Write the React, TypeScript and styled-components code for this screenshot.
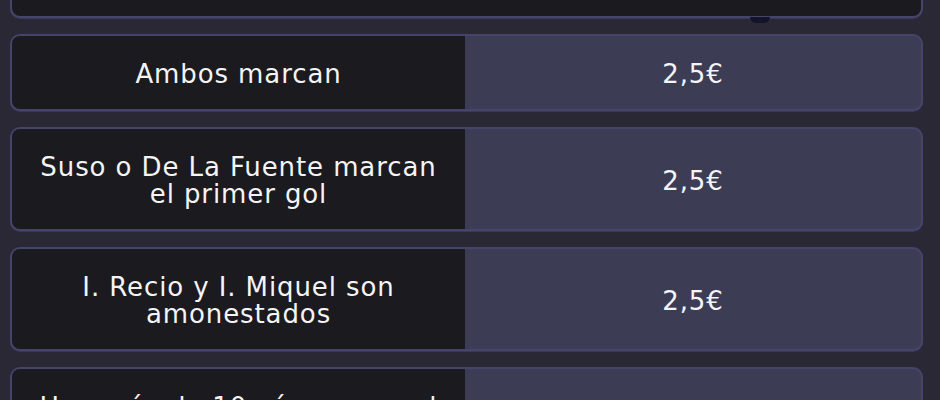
import React from "react";
import styled, { createGlobalStyle } from "styled-components";

const Global = createGlobalStyle`
  html, body {
    margin: 0;
    padding: 0;
    background: #292834;
    overflow: hidden;
  }
  body {
    font-family: "DejaVu Sans", "Open Sans", sans-serif;
    color: #f4f4f6;
  }
`;

const Page = styled.div`
  width: 940px;
  height: 400px;
  overflow: hidden;
  background: #292834;
`;

const List = styled.div`
  display: flex;
  flex-direction: column;
  gap: 16px;
  margin-top: -59px;
  padding: 0 17px 0 10px;
`;

const Card = styled.div<{ $plain?: boolean }>`
  position: relative;
  display: grid;
  grid-template-columns: ${(p) => (p.$plain ? "1fr" : "453px 1fr")};
  border: 2px solid #45446a;
  border-radius: 10px;
  background: ${(p) => (p.$plain ? "#1b1a1e" : "#3d3c55")};
  box-shadow: 0 1px 0 #3a3956;
  min-height: 73px;
`;

const Blob = styled.span`
  position: absolute;
  left: 738px;
  bottom: -7px;
  width: 20px;
  height: 6px;
  border-radius: 0 0 10px 10px;
  background: #14142a;
  filter: blur(0.6px);
`;

const Text = styled.div`
  display: flex;
  align-items: center;
  justify-content: center;
  text-align: center;
  padding: 25px 18px 21px;
  font-size: 26px;
  line-height: 27px;
  font-weight: 400;
  letter-spacing: 0.9px;
`;

const Question = styled(Text)`
  background: #1b1a1e;
  border-radius: 8px 0 0 8px;
`;

const Value = styled(Text)``;

const bets = [
  { q: "Ambos marcan", v: "2,5€" },
  { q: "Suso o De La Fuente marcan el primer gol", v: "2,5€" },
  { q: "I. Recio y I. Miquel son amonestados", v: "2,5€" },
  { q: "Hay más de 10 córners en el partido", v: "2,5€" },
];

export default function App() {
  return (
    <Page>
      <Global />
      <List>
        <Card $plain>
          <Blob />
        </Card>
        {bets.map((b) => (
          <Card key={b.q}>
            <Question>{b.q}</Question>
            <Value>{b.v}</Value>
          </Card>
        ))}
      </List>
    </Page>
  );
}
